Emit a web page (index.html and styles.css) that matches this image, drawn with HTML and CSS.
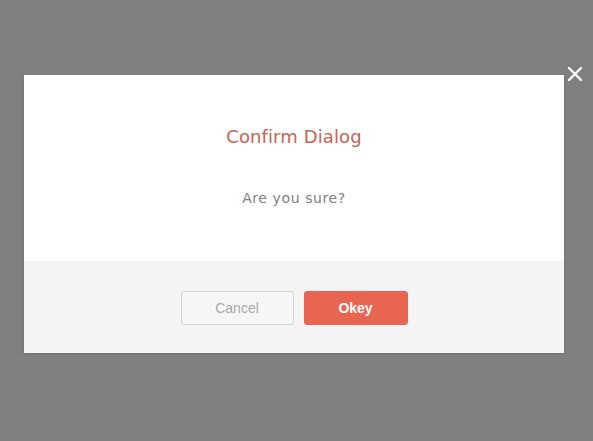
FILE: index.html
```html
<!DOCTYPE html>
<html>
<head>
<meta charset="utf-8">
<link rel="stylesheet" href="styles.css">
</head>
<body>
<div class="overlay">
  <div class="dialog">
    <button class="close" aria-label="Close">
      <svg width="16" height="16" viewBox="0 0 16 16"><path d="M2 2 L14 14 M14 2 L2 14" stroke="#fff" stroke-width="2.4" stroke-linecap="round"/></svg>
    </button>
    <div class="body">
      <h2 class="title">Confirm Dialog</h2>
      <p class="message">Are you sure?</p>
    </div>
    <div class="footer">
      <button class="btn btn-cancel">Cancel</button>
      <button class="btn btn-ok">Okey</button>
    </div>
  </div>
</div>
</body>
</html>
```
FILE: styles.css
```css
html, body {
  margin: 0;
  padding: 0;
  height: 100%;
}
body {
  background: #808080;
  font-family: "DejaVu Sans", Verdana, sans-serif;
}
.overlay {
  padding: 75px 29px 0 24px;
}
.dialog {
  position: relative;
  width: 540px;
  background: #fff;
  box-shadow: 0 1px 3px rgba(0,0,0,0.15);
}
.close {
  position: absolute;
  top: -11px;
  right: -21px;
  width: 20px;
  height: 20px;
  padding: 0;
  border: 0;
  background: none;
  display: flex;
  align-items: center;
  justify-content: center;
}
.body {
  height: 186px;
  display: flex;
  flex-direction: column;
  align-items: center;
}
.title {
  margin: 50px 0 0;
  font-size: 18px;
  font-weight: normal;
  line-height: 24px;
  color: #cb6150;
  letter-spacing: 0.1px;
}
.message {
  margin: 40px 0 0;
  font-size: 14px;
  line-height: 18px;
  color: #808080;
  letter-spacing: 0.6px;
}
.footer {
  height: 92px;
  background: #f4f4f4;
  display: flex;
  justify-content: center;
  align-items: flex-start;
  gap: 10px;
  padding-top: 30px;
  box-sizing: border-box;
}
.btn {
  height: 34px;
  font-family: "Liberation Sans", Arial, sans-serif;
  font-size: 14px;
  border-radius: 3px;
  padding: 0;
  cursor: pointer;
}
.btn-cancel {
  width: 113px;
  background: #f6f6f6;
  border: 1px solid #d4d4d4;
  color: #a8a8a8;
}
.btn-ok {
  width: 104px;
  background: #e86552;
  border: 1px solid #e86552;
  color: #fff;
  font-weight: bold;
}
```
